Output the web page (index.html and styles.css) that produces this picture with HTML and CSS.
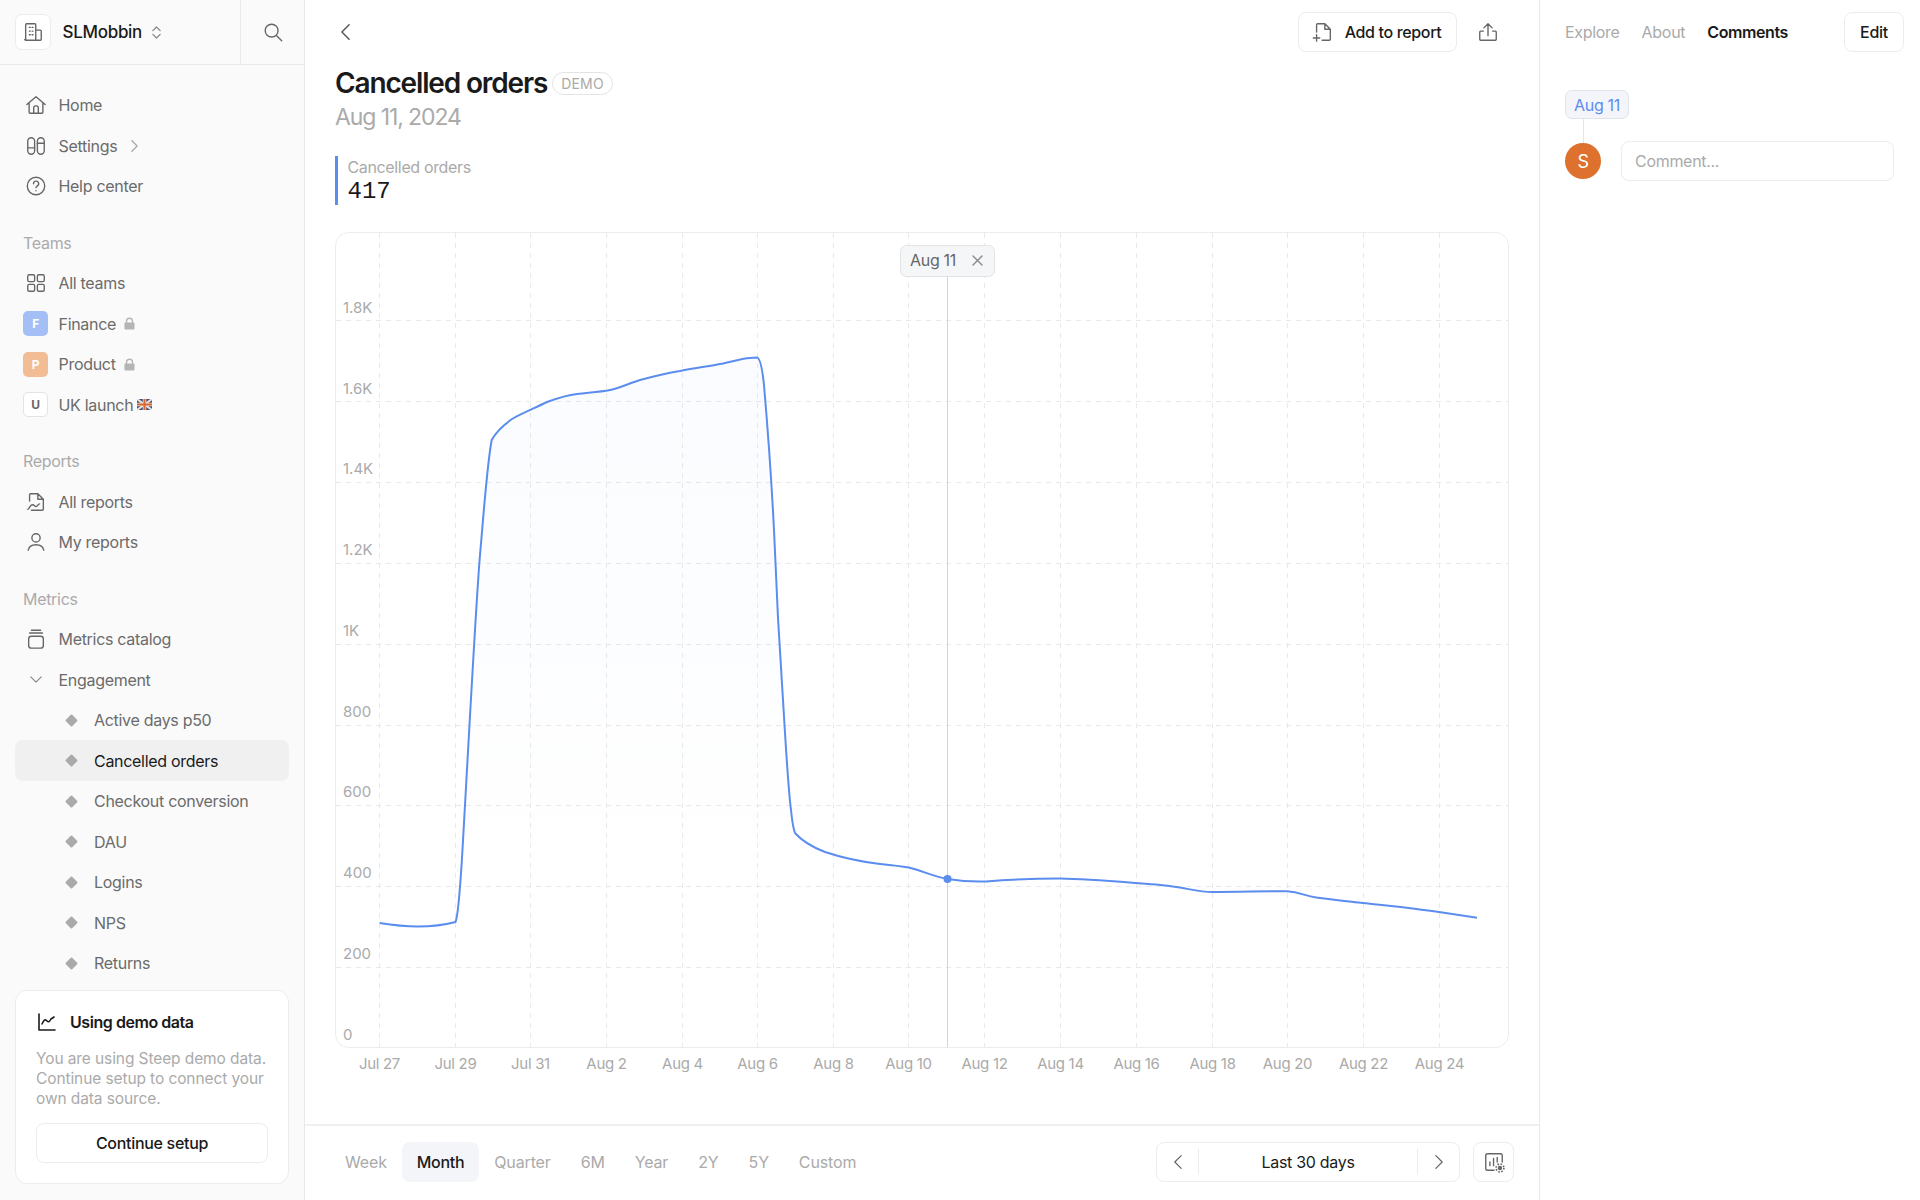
FILE: index.html
```html
<!DOCTYPE html>
<html lang="en">
<head>
<meta charset="utf-8">
<title>Cancelled orders</title>
<link rel="stylesheet" href="styles.css">
</head>
<body>
<div class="app">
  <aside class="sidebar">
    <div class="side-head">
      <div class="workspace">
        <span class="logo-box"><svg class="ic" viewBox="0 0 24 24"><path d="M4 21V4a1 1 0 0 1 1-1h9a1 1 0 0 1 1 1v17M15 10h5a1 1 0 0 1 1 1v9a1 1 0 0 1-1 1H4a1 1 0 0 1-1-1M8 7h1M11 7h1M8 11h1M11 11h1M8 15h1M11 15h1"/></svg></span>
        <span class="ws-name">SLMobbin</span>
        <svg class="updown" viewBox="0 0 12 18"><path d="M2 7l4-4 4 4M2 11l4 4 4-4"/></svg>
      </div>
      <div class="search"><svg class="ic" viewBox="0 0 24 24"><circle cx="10.5" cy="10.5" r="7"/><path d="M16 16l5.500 5.500"/></svg></div>
    </div>
    <nav class="nav">
      <div class="group">
        <a class="row"><span class="ri"><svg class="ic" viewBox="0 0 24 24"><path d="M2 11.500L12 3l10 8.500M4.500 9.500V20a1 1 0 0 0 1 1h13a1 1 0 0 0 1-1V9.500M9.500 21v-6a2 2 0 0 1 2-2h1a2 2 0 0 1 2 2v6"/></svg></span>Home</a>
        <a class="row"><span class="ri"><svg class="ic" viewBox="0 0 24 24"><rect x="3" y="3" width="7.500" height="18" rx="3.750"/><rect x="13.500" y="3" width="7.500" height="18" rx="3.750"/><path d="M3 14h7.500M13.500 9h7.500"/></svg></span>Settings<svg class="chev" viewBox="0 0 10 16"><path d="M2 2l6 6-6 6"/></svg></a>
        <a class="row"><span class="ri"><svg class="ic" viewBox="0 0 24 24"><circle cx="12" cy="12" r="9.500"/><path d="M9.300 9.500a2.800 2.800 0 1 1 4.200 2.400c-.9.600-1.500 1.100-1.500 2.100M12 17.200v.1"/></svg></span>Help center</a>
      </div>
      <div class="group">
        <div class="heading">Teams</div>
        <a class="row"><span class="ri"><svg class="ic" viewBox="0 0 24 24"><rect x="3" y="3" width="7.500" height="7.500" rx="1.500"/><rect x="13.500" y="3" width="7.500" height="7.500" rx="1.500"/><rect x="3" y="13.500" width="7.500" height="7.500" rx="1.500"/><rect x="13.500" y="13.500" width="7.500" height="7.500" rx="1.500"/></svg></span>All teams</a>
        <a class="row"><span class="badge badge-f">F</span>Finance<svg class="lock" viewBox="0 0 12 14"><path d="M2 6V4.500a4 4 0 0 1 8 0V6h.5a1 1 0 0 1 1 1v5.500a1 1 0 0 1-1 1h-9a1 1 0 0 1-1-1V7a1 1 0 0 1 1-1zm1.500 0h5V4.500a2.500 2.500 0 0 0-5 0z"/></svg></a>
        <a class="row"><span class="badge badge-p">P</span>Product<svg class="lock" viewBox="0 0 12 14"><path d="M2 6V4.500a4 4 0 0 1 8 0V6h.5a1 1 0 0 1 1 1v5.500a1 1 0 0 1-1 1h-9a1 1 0 0 1-1-1V7a1 1 0 0 1 1-1zm1.500 0h5V4.500a2.500 2.500 0 0 0-5 0z"/></svg></a>
        <a class="row"><span class="badge badge-u">U</span>UK launch<svg class="flag" viewBox="0 0 15 11"><rect width="15" height="11" fill="#4a4f73"/><path d="M0 0l15 11M15 0L0 11" stroke="#e9e4e0" stroke-width="2"/><path d="M7.500 0v11M0 5.500h15" stroke="#e9e4e0" stroke-width="3.500"/><path d="M7.500 0v11M0 5.500h15" stroke="#d8662e" stroke-width="2"/></svg></a>
      </div>
      <div class="group">
        <div class="heading">Reports</div>
        <a class="row"><span class="ri"><svg class="ic" viewBox="0 0 24 24"><path d="M5 11V4a1 1 0 0 1 1-1h8l6 6v11a1 1 0 0 1-1 1H7M14 3v6h6M3 20c2 0 2-5 5-5s2 2 4 2 2-3 4-3"/></svg></span>All reports</a>
        <a class="row"><span class="ri"><svg class="ic" viewBox="0 0 24 24"><circle cx="12" cy="7.500" r="4.500"/><path d="M3.500 21c.7-4 4-6 8.500-6s7.800 2 8.500 6"/></svg></span>My reports</a>
      </div>
      <div class="group">
        <div class="heading">Metrics</div>
        <a class="row"><span class="ri"><svg class="ic" viewBox="0 0 24 24"><rect x="4" y="9" width="16" height="13" rx="3"/><path d="M5 5.500h14M7 2.500h10"/></svg></span>Metrics catalog</a>
        <a class="row"><span class="ri"><svg class="ic-light" viewBox="0 0 16 10"><path d="M2 2l6 6 6-6"/></svg></span>Engagement</a>
        <a class="row sub"><i class="diamond"></i>Active days p50</a>
        <a class="row sub active"><i class="diamond"></i>Cancelled orders</a>
        <a class="row sub"><i class="diamond"></i>Checkout conversion</a>
        <a class="row sub"><i class="diamond"></i>DAU</a>
        <a class="row sub"><i class="diamond"></i>Logins</a>
        <a class="row sub"><i class="diamond"></i>NPS</a>
        <a class="row sub"><i class="diamond"></i>Returns</a>
      </div>
    </nav>
    <div class="demo-card">
      <div class="demo-title"><svg class="ic-dark" viewBox="0 0 20 20"><path d="M2 2v16h16M5 12c2-4 3-5 4.500-3.500S12 11 14 7l3-2"/></svg>Using demo data</div>
      <p class="demo-text">You are using Steep demo data. Continue setup to connect your own data source.</p>
      <button class="btn btn-wide">Continue setup</button>
    </div>
  </aside>

  <main class="main">
    <div class="topbar">
      <svg class="back" viewBox="0 0 12 20"><path d="M10 2L2 10l8 8"/></svg>
      <div class="top-actions">
        <button class="btn btn-add"><svg class="ic" viewBox="0 0 24 24"><path d="M5 12V4a1 1 0 0 1 1-1h8l6 6v11a1 1 0 0 1-1 1h-8M14 3v6h6M5 15v7M1.500 18.500h7"/></svg>Add to report</button>
        <span class="icon-plain"><svg class="ic" viewBox="0 0 24 24"><path d="M12 16V3M7.500 7.500L12 3l4.500 4.500M7 11H4a1 1 0 0 0-1 1v8a1 1 0 0 0 1 1h16a1 1 0 0 0 1-1v-8a1 1 0 0 0-1-1h-3"/></svg></span>
      </div>
    </div>
    <div class="head">
      <div class="title-row"><h1 class="title">Cancelled orders</h1><span class="demo-tag">DEMO</span></div>
      <div class="date">Aug 11, 2024</div>
      <div class="metric">
        <div class="metric-label">Cancelled orders</div>
        <div class="metric-value">417</div>
      </div>
    </div>
    <svg class="chart" viewBox="335 232 1174 848">
      <defs>
        <linearGradient id="areaFill" gradientUnits="userSpaceOnUse" x1="0" y1="357" x2="0" y2="900">
          <stop offset="0" stop-color="#5b8def" stop-opacity=".03"/>
          <stop offset="1" stop-color="#5b8def" stop-opacity="0"/>
        </linearGradient>
      </defs>
      <rect class="frame" x="335.500" y="232.500" width="1173" height="815" rx="13"/>
      <g class="grid">
        <path d="M336 320.500H1508M336 401.500H1508M336 482.500H1508M336 563.500H1508M336 644.500H1508M336 725.500H1508M336 805.500H1508M336 886.500H1508M336 967.500H1508"/>
        <path d="M379.500 233V1047M455.500 233V1047M530.500 233V1047M606.500 233V1047M682.500 233V1047M757.500 233V1047M833.500 233V1047M908.500 233V1047M984.500 233V1047M1060.500 233V1047M1136.500 233V1047M1212.500 233V1047M1287.500 233V1047M1363.500 233V1047M1439.500 233V1047"/>
      </g>
      <path class="area" d="M455.500 922C458.500 915 460 890 462 858C466 790 476 600 480 555C484 510 487 465 491.700 440C497 430 505 424 512 419C520 414 535 408 547 402C558 398 568 395 577 394C590 392.500 600 392 610 390C620 388 630 383 640 380C655 376 668 373 680 371C695 368 710 366 720 364C730 362 742 358.500 750 358L757 357.500C760 358 762 366 764 385C767 420 772 490 774 530L778 618L785 733C787 765 789 795 791 810C792 820 793 828 795 833C802 841 812 847 825 852V1047H455.500Z"/>
      <path class="crosshair" d="M947.500 277V1047"/>
      <path class="line" d="M379.600 923C392 925 408 926.500 418 926.500C432 926.500 446 924.500 455.500 922C458.500 915 460 890 462 858C466 790 476 600 480 555C484 510 487 465 491.700 440C497 430 505 424 512 419C520 414 535 408 547 402C558 398 568 395 577 394C590 392.500 600 392 610 390C620 388 630 383 640 380C655 376 668 373 680 371C695 368 710 366 720 364C730 362 742 358.500 750 358L757 357.500C760 358 762 366 764 385C767 420 772 490 774 530L778 618L785 733C787 765 789 795 791 810C792 820 793 828 795 833C802 841 812 847 825 852C840 857 855 861 880 864C890 865 900 866 908.600 867.500C920 870 935 877 947.500 879C960 881 972 882 986 881.500C1005 880 1030 878.600 1060 878.600C1085 879 1110 881 1136 883C1150 884 1165 885 1173 886.500C1190 889 1200 892 1212 892C1240 892 1265 891 1287 891.200C1300 892 1305 896 1316 897.500C1330 899.500 1345 901 1363 903C1390 906 1415 908.500 1439 912C1452 914 1465 916 1477 917.700"/>
      <circle class="dot" cx="947.500" cy="879" r="4"/>
      <g class="y-labels">
        <text x="343" y="313">1.8K</text>
        <text x="343" y="393.500">1.6K</text>
        <text x="343" y="474">1.4K</text>
        <text x="343" y="555">1.2K</text>
        <text x="343" y="636">1K</text>
        <text x="343" y="716.500">800</text>
        <text x="343" y="797">600</text>
        <text x="343" y="878">400</text>
        <text x="343" y="959">200</text>
        <text x="343" y="1039.500">0</text>
      </g>
      <g class="x-labels">
        <text x="379.500" y="1069">Jul 27</text>
        <text x="455.500" y="1069">Jul 29</text>
        <text x="530.500" y="1069">Jul 31</text>
        <text x="606.500" y="1069">Aug 2</text>
        <text x="682.500" y="1069">Aug 4</text>
        <text x="757.500" y="1069">Aug 6</text>
        <text x="833.500" y="1069">Aug 8</text>
        <text x="908.500" y="1069">Aug 10</text>
        <text x="984.500" y="1069">Aug 12</text>
        <text x="1060.500" y="1069">Aug 14</text>
        <text x="1136.500" y="1069">Aug 16</text>
        <text x="1212.500" y="1069">Aug 18</text>
        <text x="1287.500" y="1069">Aug 20</text>
        <text x="1363.500" y="1069">Aug 22</text>
        <text x="1439.500" y="1069">Aug 24</text>
      </g>
      <rect class="pill" x="900.500" y="245.500" width="94" height="31" rx="6"/>
      <text class="pill-text" x="910" y="266">Aug 11</text>
      <path class="pill-x" d="M973 256l9 9M982 256l-9 9"/>
    </svg>
    <div class="footer">
      <div class="ranges">
        <span class="range">Week</span>
        <span class="range range-on">Month</span>
        <span class="range">Quarter</span>
        <span class="range">6M</span>
        <span class="range">Year</span>
        <span class="range">2Y</span>
        <span class="range">5Y</span>
        <span class="range">Custom</span>
      </div>
      <div class="foot-right">
        <div class="stepper">
          <span class="step"><svg class="step-ic" viewBox="0 0 12 20"><path d="M10 2L2 10l8 8"/></svg></span>
          <span class="step-label">Last 30 days</span>
          <span class="step"><svg class="step-ic" viewBox="0 0 12 20"><path d="M2 2l8 8-8 8"/></svg></span>
        </div>
        <button class="btn btn-icon"><svg class="ic" viewBox="0 0 24 24"><path d="M12 21H5a2 2 0 0 1-2-2V5a2 2 0 0 1 2-2h14a2 2 0 0 1 2 2v7M7.500 16v-4M11.500 16V8M15.500 12V7"/><circle class="gear-teeth" cx="18.500" cy="18.500" r="4.300"/><circle class="gear" cx="18.500" cy="18.500" r="2.400"/></svg></button>
      </div>
    </div>
  </main>

  <aside class="panel">
    <div class="panel-head">
      <div class="tabs">
        <span class="tab">Explore</span>
        <span class="tab">About</span>
        <span class="tab tab-on">Comments</span>
      </div>
      <button class="btn btn-edit">Edit</button>
    </div>
    <div class="panel-body">
      <span class="chip">Aug 11</span>
      <div class="connector"></div>
      <div class="comment-row">
        <span class="avatar">S</span>
        <input class="comment" type="text" placeholder="Comment...">
      </div>
    </div>
  </aside>
</div>
</body>
</html>
```

FILE: styles.css
```css
* { box-sizing: border-box; }
html, body { margin: 0; padding: 0; height: 100%; }
body { font-family: Inter, "Liberation Sans", sans-serif; font-size: 16px; color: #1a1a1a; background: #fff; letter-spacing: -0.3px; }
.app { display: flex; width: 1920px; height: 1200px; overflow: hidden; }

svg { display: block; flex: none; }
.ic, .ic-light, .ic-dark, .updown, .chev, .back, .step-ic { fill: none; stroke-linecap: round; stroke-linejoin: round; }
.ic { width: 22px; height: 22px; stroke: #666; stroke-width: 1.5; }
.ic-light { width: 14px; height: 9px; stroke: #888; stroke-width: 1.4; }
.ic-dark { width: 20px; height: 20px; stroke: #1a1a1a; stroke-width: 1.6; }
.updown { width: 11px; height: 17px; stroke: #888; stroke-width: 1.4; }
.chev { width: 9px; height: 14px; stroke: #aaa; stroke-width: 1.6; margin-left: 13px; }
.back { width: 11px; height: 18px; stroke: #555; stroke-width: 1.6; }
.lock { width: 11px; height: 13px; fill: #b5b5b5; fill-rule: evenodd; margin-left: 8px; }
.flag { width: 15px; height: 11px; margin-left: 4px; }
.gear { fill: #666; stroke: none; }
.gear-teeth { fill: #fff; stroke: #666; stroke-width: 1.800; stroke-dasharray: 1.700 1.700; stroke-linecap: butt; }

.sidebar { width: 305px; flex: none; background: #fafafa; border-right: 1px solid #e9e9e9; display: flex; flex-direction: column; height: 100%; }
.side-head { height: 65px; flex: none; display: flex; border-bottom: 1px solid #e9e9e9; }
.workspace { width: 241px; border-right: 1px solid #e9e9e9; display: flex; align-items: center; padding-left: 15px; gap: 9px; }
.logo-box { width: 36px; height: 36px; background: #fff; border: 1px solid #ececec; border-radius: 7px; display: flex; align-items: center; justify-content: center; margin-right: 2.500px; }
.ws-name { font-size: 17px; font-weight: 500; color: #1a1a1a; }
.search { flex: 1; display: flex; align-items: center; justify-content: center; }

.nav { padding: 19.750px 15px 0; display: flex; flex-direction: column; gap: 16px; }
.group { display: flex; flex-direction: column; }
.heading { height: 40.500px; display: flex; align-items: center; padding-left: 8px; color: #aaa; }
.row { height: 40.500px; display: flex; align-items: center; padding-left: 8px; color: #6b6b6b; border-radius: 8px; }
.ri { width: 25px; display: flex; align-items: center; justify-content: center; margin-right: 10.500px; flex: none; }
.badge { width: 25px; height: 25px; border-radius: 5px; margin-right: 10.500px; display: flex; align-items: center; justify-content: center; font-size: 12px; font-weight: 700; color: #fff; flex: none; }
.badge-f { background: #a3bff5; }
.badge-p { background: #f2bd94; }
.badge-u { background: #fff; color: #666; border: 1px solid #e3e3e3; }
.sub { padding-left: 50px; }
.sub.active { background: #f0f0f0; color: #1a1a1a; }
.diamond { width: 9px; height: 9px; background: #aaa; transform: rotate(45deg); border-radius: 1px; margin-right: 18.500px; margin-left: 1.500px; flex: none; }

.demo-card { margin: auto 15px 16px; height: 194px; flex: none; background: #fff; border: 1px solid #ececec; border-radius: 12px; padding: 19px 20px 20px; }
.demo-title { display: flex; align-items: center; gap: 13px; font-weight: 600; letter-spacing: -0.45px; color: #1a1a1a; margin: 1px 0 16px; padding-left: 1px; height: 22px; }
.demo-text { margin: 0 0 14px; color: #aaa; line-height: 20px; font-size: 15.500px; letter-spacing: -0.1px; }
.btn { font: inherit; letter-spacing: inherit; background: #fff; border: 1px solid #ececec; border-radius: 8px; color: #1a1a1a; height: 40px; display: inline-flex; align-items: center; justify-content: center; font-weight: 500; padding: 0; }
.btn-wide { width: 232px; }

.main { width: 1235px; flex: none; border-right: 1px solid #e9e9e9; display: flex; flex-direction: column; height: 100%; }
.topbar { height: 65px; flex: none; display: flex; align-items: center; justify-content: space-between; padding: 0 31px 1px 35px; }
.top-actions { display: flex; align-items: center; gap: 11px; }
.btn-add { width: 159px; gap: 11px; letter-spacing: -0.35px; padding-right: 2px; }
.icon-plain { width: 40px; height: 40px; display: flex; align-items: center; justify-content: center; }
.head { padding-left: 30px; flex: none; }
.title-row { display: flex; align-items: center; height: 34px; gap: 5px; }
.title { margin: 0; padding-top: 2px; font-size: 28px; font-weight: 600; letter-spacing: -1.15px; color: #1a1a1a; }
.demo-tag { height: 23px; padding: 0 8px; border: 1px solid #e3e3e3; border-radius: 12px; font-size: 14px; color: #aaa; display: flex; align-items: center; letter-spacing: .2px; margin-top: 2px; }
.date { height: 34px; margin-top: 1px; font-size: 23px; color: #aaa; display: flex; align-items: center; letter-spacing: -1.1px; }
.metric { margin-top: 22px; height: 49px; border-left: 3px solid #5b8def; padding-left: 9.500px; }
.metric-label { height: 22px; line-height: 22px; color: #aaa; letter-spacing: -0.35px; }
.metric-value { font-family: "Liberation Mono", monospace; font-size: 24px; line-height: 28px; letter-spacing: 0; color: #1a1a1a; }

.chart { margin: 27px 0 0 30px; width: 1174px; height: 848px; flex: none; }
.frame { fill: #fff; stroke: #ececec; }
.grid path { fill: none; stroke: #e9e9e9; stroke-dasharray: 5 5; }
.area { fill: url(#areaFill); }
.crosshair { stroke: #d4d4d4; fill: none; }
.line { fill: none; stroke: #5b8def; stroke-width: 2; stroke-linejoin: round; }
.dot { fill: #5b8def; }
.y-labels text { font-size: 15px; fill: #aaa; letter-spacing: 0; }
.x-labels text { font-size: 15px; fill: #aaa; text-anchor: middle; }
.pill { fill: #f5f6f8; stroke: #e3e3e3; }
.pill-text { font-size: 16px; fill: #666; }
.pill-x { stroke: #888; stroke-width: 1.400; fill: none; stroke-linecap: round; }

.footer { margin-top: auto; height: 76px; flex: none; border-top: 2px solid #f0f0f0; padding: 16px 25px 0; display: flex; justify-content: space-between; align-items: flex-start; }
.ranges { display: flex; letter-spacing: -0.15px; }
.range { height: 40px; padding: 0 15px; display: flex; align-items: center; color: #aaa; border-radius: 8px; }
.range-on { background: #f3f5f9; color: #1a1a1a; font-weight: 500; letter-spacing: -0.3px; }
.foot-right { display: flex; gap: 13px; }
.stepper { width: 304px; height: 40px; border: 1px solid #ececec; border-radius: 8px; display: flex; align-items: center; }
.step { width: 42px; height: 26px; display: flex; align-items: center; justify-content: center; flex: none; }
.step:first-child { border-right: 1px solid #ececec; }
.step:last-child { border-left: 1px solid #ececec; }
.step-ic { width: 10px; height: 16px; stroke: #666; stroke-width: 1.5; }
.step-label { flex: 1; text-align: center; }
.btn-icon { width: 41px; }

.panel { flex: 1; min-width: 0; width: 380px; display: flex; flex-direction: column; }
.panel-head { height: 65px; flex: none; padding: 0 16px 1px 25px; display: flex; align-items: center; justify-content: space-between; }
.tabs { display: flex; gap: 22px; }
.tab { color: #aaa; }
.tab-on { color: #1a1a1a; font-weight: 600; letter-spacing: -0.4px; }
.btn-edit { width: 60px; }
.panel-body { padding: 25px 26px 0 25px; display: flex; flex-direction: column; align-items: flex-start; }
.chip { height: 29px; padding: 0 8px; border: 1px solid #e0e3ea; border-radius: 7px; background: #f3f5fa; color: #5b8def; display: flex; align-items: center; }
.connector { width: 1px; height: 24px; background: #e6e6e6; margin: 0 0 -2px 18px; }
.comment-row { display: flex; align-items: center; gap: 20px; width: 100%; }
.avatar { width: 36px; height: 36px; border-radius: 50%; background: #dd712d; color: #fff; display: flex; align-items: center; justify-content: center; font-size: 18px; flex: none; position: relative; }
.comment { flex: 1; min-width: 0; height: 40px; border: 1px solid #ececec; border-radius: 8px; padding: 0 13px; font: inherit; letter-spacing: inherit; color: #1a1a1a; background: #fff; }
.comment::placeholder { color: #aaa; opacity: 1; }
```
